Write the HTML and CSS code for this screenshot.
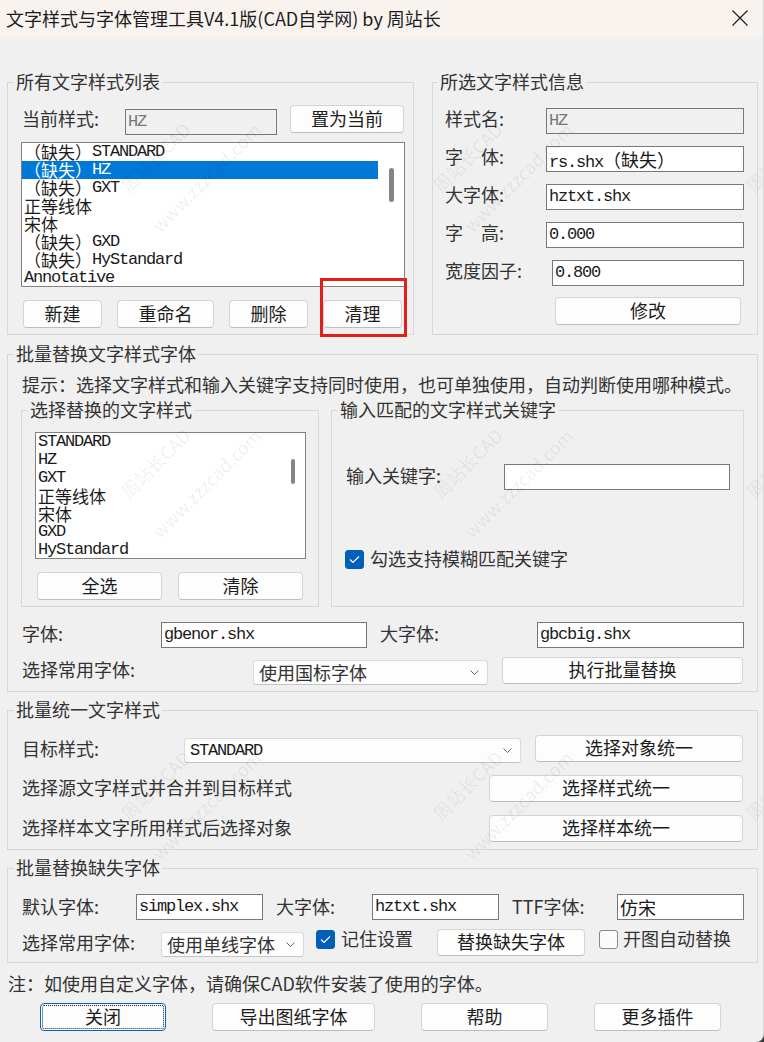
FILE: index.html
```html
<!DOCTYPE html>
<html lang="zh-CN">
<head>
  <meta charset="UTF-8">
  <title>文字样式与字体管理工具</title>
  <link rel="stylesheet" href="styles.css">
</head>
<body>
  <div class="window">
    <header class="titlebar">
      <span class="title">文字样式与字体管理工具V4.1版(CAD自学网) by 周站长</span>
      <svg class="close-x" width="16" height="16" viewBox="0 0 16 16"><path d="M0.5 0.5L15.5 15.5M15.5 0.5L0.5 15.5"/></svg>
    </header>

    <main class="dialog">
      <div class="top-row">
        <!-- style list -->
        <fieldset class="group style-list">
          <legend>所有文字样式列表</legend>
          <div class="gbody">
            <div class="row cur-row">
              <span class="lbl">当前样式:</span>
              <div class="edit disabled">HZ</div>
              <button class="btn">置为当前</button>
            </div>
            <div class="listbox styles-box">
              <div class="items">
                <div class="item"><span class="cj">（缺失）</span><span>STANDARD</span></div>
                <div class="item selected"><span class="cj">（缺失）</span><span>HZ</span></div>
                <div class="item"><span class="cj">（缺失）</span><span>GXT</span></div>
                <div class="item"><span class="cj">正等线体</span></div>
                <div class="item"><span class="cj">宋体</span></div>
                <div class="item"><span class="cj">（缺失）</span><span>GXD</span></div>
                <div class="item"><span class="cj">（缺失）</span><span>HyStandard</span></div>
                <div class="item"><span>Annotative</span></div>
              </div>
              <div class="vscroll"><div class="thumb"></div></div>
            </div>
            <div class="btn-row list-actions">
              <button class="btn b-new">新建</button>
              <button class="btn b-rename">重命名</button>
              <button class="btn b-del">删除</button>
              <span class="mark"><button class="btn b-purge">清理</button></span>
            </div>
          </div>
        </fieldset>

        <!-- selected style info -->
        <fieldset class="group style-info">
          <legend>所选文字样式信息</legend>
          <div class="gbody">
            <div class="field"><span class="lbl">样式名:</span><div class="edit disabled">HZ</div></div>
            <div class="field"><span class="lbl">字　体:</span><div class="edit">rs.shx<span class="cj">（缺失）</span></div></div>
            <div class="field"><span class="lbl">大字体:</span><div class="edit">hztxt.shx</div></div>
            <div class="field"><span class="lbl">字　高:</span><div class="edit">0.000</div></div>
            <div class="field wide-lbl"><span class="lbl">宽度因子:</span><div class="edit">0.800</div></div>
            <button class="btn b-modify">修改</button>
          </div>
        </fieldset>
      </div>

      <!-- batch replace -->
      <fieldset class="group batch">
        <legend>批量替换文字样式字体</legend>
        <div class="gbody">
          <p class="hint">提示：选择文字样式和输入关键字支持同时使用，也可单独使用，自动判断使用哪种模式。</p>
          <div class="sub-row">
            <fieldset class="group pick">
              <legend>选择替换的文字样式</legend>
              <div class="gbody">
                <div class="listbox pick-box">
                  <div class="items">
                    <div class="item"><span>STANDARD</span></div>
                    <div class="item"><span>HZ</span></div>
                    <div class="item"><span>GXT</span></div>
                    <div class="item"><span class="cj">正等线体</span></div>
                    <div class="item"><span class="cj">宋体</span></div>
                    <div class="item"><span>GXD</span></div>
                    <div class="item"><span>HyStandard</span></div>
                  </div>
                  <div class="vscroll"><div class="thumb"></div></div>
                </div>
                <div class="btn-row pick-actions">
                  <button class="btn">全选</button>
                  <button class="btn">清除</button>
                </div>
              </div>
            </fieldset>
            <fieldset class="group keyword">
              <legend>输入匹配的文字样式关键字</legend>
              <div class="gbody">
                <div class="row kw-row">
                  <span class="lbl">输入关键字:</span>
                  <div class="edit"></div>
                </div>
                <div class="opt fuzzy">
                  <span class="check on"><svg width="11" height="9" viewBox="0 0 11 9"><path d="M1 4.5L4 7.5L10 1.5"/></svg></span>
                  <span>勾选支持模糊匹配关键字</span>
                </div>
              </div>
            </fieldset>
          </div>
          <div class="row font-row">
            <span class="lbl l-font">字体:</span>
            <div class="edit e-font">gbenor.shx</div>
            <span class="lbl l-big">大字体:</span>
            <div class="edit e-big">gbcbig.shx</div>
          </div>
          <div class="row common-row">
            <span class="lbl l-common">选择常用字体:</span>
            <div class="combo c-common"><span>使用国标字体</span><svg class="chev" width="9" height="5" viewBox="0 0 9 5"><path d="M0.5 0.5L4.5 4.5L8.5 0.5"/></svg></div>
            <button class="btn b-run">执行批量替换</button>
          </div>
        </div>
      </fieldset>

      <!-- unify styles -->
      <fieldset class="group unify">
        <legend>批量统一文字样式</legend>
        <div class="gbody">
          <div class="row target-row">
            <span class="lbl l-target">目标样式:</span>
            <div class="combo c-target"><span class="mono">STANDARD</span><svg class="chev" width="9" height="5" viewBox="0 0 9 5"><path d="M0.5 0.5L4.5 4.5L8.5 0.5"/></svg></div>
            <button class="btn b-obj">选择对象统一</button>
          </div>
          <div class="row line-row">
            <span class="lbl">选择源文字样式并合并到目标样式</span>
            <button class="btn b-line">选择样式统一</button>
          </div>
          <div class="row line-row">
            <span class="lbl">选择样本文字所用样式后选择对象</span>
            <button class="btn b-line">选择样本统一</button>
          </div>
        </div>
      </fieldset>

      <!-- missing fonts -->
      <fieldset class="group missing">
        <legend>批量替换缺失字体</legend>
        <div class="gbody">
          <div class="row miss-row">
            <span class="lbl l-def">默认字体:</span>
            <div class="edit e-small">simplex.shx</div>
            <span class="lbl l-mid">大字体:</span>
            <div class="edit e-small">hztxt.shx</div>
            <span class="lbl l-ttf">TTF字体:</span>
            <div class="edit e-small"><span class="cj">仿宋</span></div>
          </div>
          <div class="row miss-opts">
            <span class="lbl l-common2">选择常用字体:</span>
            <div class="combo c-line"><span>使用单线字体</span><svg class="chev" width="9" height="5" viewBox="0 0 9 5"><path d="M0.5 0.5L4.5 4.5L8.5 0.5"/></svg></div>
            <div class="opt remember">
              <span class="check on"><svg width="11" height="9" viewBox="0 0 11 9"><path d="M1 4.5L4 7.5L10 1.5"/></svg></span>
              <span>记住设置</span>
            </div>
            <button class="btn b-miss">替换缺失字体</button>
            <div class="opt auto">
              <span class="check"></span>
              <span>开图自动替换</span>
            </div>
          </div>
        </div>
      </fieldset>

      <p class="note">注：如使用自定义字体，请确保CAD软件安装了使用的字体。</p>

      <div class="actions">
        <button class="btn act focus">关闭</button>
        <button class="btn act export">导出图纸字体</button>
        <button class="btn act">帮助</button>
        <button class="btn act">更多插件</button>
      </div>
    </main>

    <div class="watermarks">
      <div class="wm p1"><span class="brand">周站长CAD</span><span class="site">www.zzzcad.com</span></div>
      <div class="wm p2"><span class="brand">周站长CAD</span><span class="site">www.zzzcad.com</span></div>
      <div class="wm p3"><span class="brand">周站长CAD</span><span class="site">www.zzzcad.com</span></div>
      <div class="wm p4"><span class="brand">周站长CAD</span><span class="site">www.zzzcad.com</span></div>
      <div class="wm p5"><span class="brand">周站长CAD</span><span class="site">www.zzzcad.com</span></div>
      <div class="wm p6"><span class="brand">周站长CAD</span><span class="site">www.zzzcad.com</span></div>
      <div class="wm p7"><span class="brand">周站长CAD</span><span class="site">www.zzzcad.com</span></div>
      <div class="wm p8"><span class="brand">周站长CAD</span><span class="site">www.zzzcad.com</span></div>
      <div class="wm p9"><span class="brand">周站长CAD</span><span class="site">www.zzzcad.com</span></div>
    </div>
  </div>
</body>
</html>
```

FILE: styles.css
```css
* {
  box-sizing: border-box;
}

html {
  background: #3c3c3c;
}

body {
  margin: 0;
  width: 764px;
  height: 1042px;
  overflow: hidden;
  font-family: "Noto Sans CJK SC", sans-serif;
  font-size: 18px;
  color: #333;
}

.window {
  position: relative;
  width: 764px;
  height: 1042px;
  background: #f0f0f0;
  border-right: 1px solid #d6d6d6;
  border-bottom-right-radius: 8px;
  overflow: hidden;
}

/* title bar */
.titlebar {
  height: 37px;
  display: flex;
  align-items: center;
  justify-content: space-between;
  padding: 0 15px 2px 6px;
  background: #f8f3ef;
  color: #1c1c1c;
  line-height: 20px;
}

.close-x {
  fill: none;
  stroke: #1c1c1c;
  stroke-width: 1.2;
}

.dialog {
  padding: 0 5px 0 7px;
}

/* group boxes */
.group {
  margin: 0;
  padding: 0;
  min-width: 0;
  border: 1px solid #d8d8d8;
}

.group legend {
  margin-left: 6px;
  padding: 0 2px 3px;
  line-height: 18px;
  color: #333;
}

.row {
  display: flex;
  align-items: flex-start;
}

.lbl {
  flex: none;
  white-space: nowrap;
}

.btn {
  flex: none;
  height: 28px;
  padding: 0 0 2px;
  font-family: inherit;
  font-size: 18px;
  line-height: 24px;
  color: #1c1c1c;
  background: #fdfdfd;
  border: 1px solid #d4d4d4;
  border-bottom-color: #bdbdbd;
  border-radius: 4px;
}

.edit {
  flex: none;
  height: 26px;
  padding-left: 2px;
  background: #fff;
  border: 1px solid #787878;
  font: 17px/24px "Liberation Mono", "Noto Sans CJK SC", monospace;
  letter-spacing: -1.2px;
  color: #1a1a1a;
  white-space: nowrap;
  overflow: hidden;
}

.edit.disabled {
  background: #f0f0f0;
  color: #777;
}

.cj {
  font-family: "Noto Sans CJK SC", sans-serif;
  font-size: 18px;
  letter-spacing: 0;
}

.mono {
  font: 17px "Liberation Mono", monospace;
  letter-spacing: -1.2px;
  color: #1a1a1a;
}

.combo {
  flex: none;
  height: 25px;
  display: flex;
  align-items: center;
  justify-content: space-between;
  padding: 0 8px 1px 5px;
  background: #fdfdfd;
  border: 1px solid #dadada;
  border-bottom-color: #c4c4c4;
  border-radius: 3px;
  line-height: 22px;
}

.chev {
  fill: none;
  stroke: #666;
  stroke-width: 1;
}

.check {
  flex: none;
  width: 19px;
  height: 19px;
  margin-top: 1px;
  display: flex;
  align-items: center;
  justify-content: center;
  background: #fbfbfb;
  border: 1px solid #8a8a8a;
  border-radius: 3px;
}

.check.on {
  background: #005fb8;
  border-color: #005fb8;
}

.check svg {
  fill: none;
  stroke: #fff;
  stroke-width: 1.2;
}

.opt {
  display: flex;
  align-items: flex-start;
  gap: 6px;
  line-height: 19px;
  white-space: nowrap;
}

/* list boxes */
.listbox {
  display: flex;
  background: #fff;
  border: 1px solid #828282;
  overflow: hidden;
}

.items {
  flex: none;
  overflow: hidden;
}

.item {
  display: flex;
  align-items: center;
  height: 18px;
  padding-left: 2px;
  white-space: nowrap;
  font: 17px/16px "Liberation Mono", monospace;
  letter-spacing: -1.2px;
  color: #1a1a1a;
}

.item .cj {
  font-size: 17px;
  line-height: 16px;
}

.item.selected {
  background: #0078d7;
  color: #fff;
}

.vscroll {
  flex: 1;
}

.thumb {
  width: 5px;
  margin-left: 11px;
  border-radius: 3px;
  background: #858585;
}

.btn-row {
  display: flex;
}

/* top row */
.top-row {
  display: flex;
  gap: 18px;
  margin-top: 35px;
}

.style-list {
  width: 407px;
}

.style-list > .gbody {
  padding: 12px 7px 6px 13px;
}

.cur-row {
  height: 30px;
}

.cur-row .lbl {
  width: 104px;
  padding-left: 1px;
  line-height: 26px;
}

.cur-row .edit {
  width: 152px;
  margin-top: 4px;
}

.cur-row .btn {
  width: 114px;
  margin-left: 13px;
}

.styles-box {
  width: 384px;
  height: 145px;
  margin-top: 7px;
}

.styles-box .items {
  width: 356px;
}

.styles-box .thumb {
  height: 34px;
  margin-top: 25px;
}

.list-actions {
  gap: 15px;
  margin-top: 13px;
  padding-left: 2px;
}

.b-new,
.b-del,
.b-purge {
  width: 79px;
}

.b-rename {
  width: 97px;
}

.mark {
  position: relative;
  display: flex;
}

.mark::after {
  content: "";
  position: absolute;
  left: -3px;
  right: -5px;
  top: -22px;
  bottom: -9px;
  border: 3px solid #e0201b;
  pointer-events: none;
}

.style-info {
  width: 326px;
}

.style-info legend {
  margin-left: 5px;
}

.style-info > .gbody {
  padding: 15px 13px 9px 12px;
}

.field {
  display: flex;
  height: 26px;
}

.field + .field {
  margin-top: 12px;
}

.field .lbl {
  width: 101px;
  line-height: 21px;
}

.field .edit {
  flex: 1;
}

.field.wide-lbl .lbl {
  width: 107px;
}

.b-modify {
  display: block;
  width: 186px;
  margin: 11px 0 0 110px;
}

/* batch replace */
.batch {
  margin-top: 9px;
}

.batch > .gbody {
  padding: 0 13px 6px 13px;
}

.hint {
  margin: 9px 0 0;
  padding: 0 0 1px 1px;
  line-height: 20px;
  white-space: nowrap;
}

.sub-row {
  display: flex;
  gap: 12px;
  margin-top: 5px;
}

.pick {
  width: 298px;
}

.pick > .gbody {
  padding: 11px 0 6px 13px;
}

.pick-box {
  width: 271px;
  height: 127px;
}

.pick-box .items {
  width: 244px;
}

.pick-box .thumb {
  width: 4px;
  height: 25px;
  margin-top: 26px;
}

.pick-actions {
  gap: 16px;
  margin-top: 13px;
  padding-left: 2px;
}

.pick-actions .btn {
  width: 125px;
}

.keyword {
  flex: 1;
}

.keyword > .gbody {
  padding: 43px 13px 0 13px;
}

.kw-row .lbl {
  width: 159px;
  padding-left: 1px;
  line-height: 22px;
}

.kw-row .edit {
  width: 226px;
}

.fuzzy {
  margin-top: 59px;
}

.font-row {
  margin-top: 15px;
}

.font-row .lbl {
  line-height: 22px;
}

.l-font {
  width: 140px;
  padding-left: 1px;
}

.e-font {
  width: 206px;
}

.l-big {
  width: 170px;
  padding-left: 13px;
}

.e-big {
  flex: 1;
}

.common-row {
  margin-top: 9px;
}

.l-common {
  width: 232px;
  padding-left: 1px;
  line-height: 25px;
}

.c-common {
  width: 235px;
  margin-top: 3px;
}

.b-run {
  width: 241px;
  height: 27px;
  margin-left: 14px;
  line-height: 23px;
}

/* unify styles */
.unify {
  margin-top: 8px;
}

.unify > .gbody {
  padding: 14px 14px 7px 13px;
}

.l-target {
  width: 163px;
  padding-left: 1px;
  line-height: 26px;
}

.c-target {
  width: 337px;
  margin-top: 3px;
}

.b-obj {
  width: 208px;
  height: 27px;
  margin-left: 14px;
  line-height: 23px;
}

.line-row {
  justify-content: space-between;
  margin-top: 12px;
}

.line-row + .line-row {
  margin-top: 13px;
}

.line-row .lbl {
  padding-left: 1px;
  line-height: 24px;
}

.b-line {
  width: 254px;
  height: 27px;
  line-height: 23px;
}

/* missing fonts */
.missing {
  margin-top: 8px;
}

.missing > .gbody {
  padding: 15px 13px 5px 13px;
}

.miss-row .lbl {
  line-height: 24px;
}

.l-def {
  width: 115px;
  padding-left: 1px;
}

.e-small {
  width: 127px;
}

.l-mid {
  width: 109px;
  padding-left: 13px;
}

.l-ttf {
  width: 118px;
  padding-left: 13px;
}

.miss-opts {
  margin-top: 9px;
}

.l-common2 {
  width: 140px;
  padding-left: 1px;
  line-height: 26px;
}

.c-line {
  width: 143px;
  margin-top: 3px;
}

.remember {
  width: 121px;
  margin-left: 12px;
}

.b-miss {
  width: 148px;
  height: 27px;
  line-height: 23px;
}

.auto {
  gap: 5px;
  margin-left: 14px;
}

/* footer */
.note {
  margin: 11px 0 0 1px;
  padding-bottom: 2px;
  line-height: 18px;
  white-space: nowrap;
}

.actions {
  display: flex;
  gap: 46px;
  margin-top: 9px;
  padding-left: 33px;
}

.act {
  width: 127px;
}

.act.focus {
  width: 126px;
  border-color: #0067c0;
  outline: 1px dotted #222;
  outline-offset: -3px;
}

.act.export {
  width: 163px;
}

/* watermark */
.watermarks {
  position: absolute;
  inset: 0;
  pointer-events: none;
}

.wm {
  position: absolute;
  width: 0;
  height: 0;
  transform: rotate(-45deg);
  transform-origin: 0 0;
  color: rgba(0, 0, 0, 0.07);
  font-size: 18px;
  line-height: 20px;
  white-space: nowrap;
}

.wm span {
  position: absolute;
  text-align: center;
}

.wm .brand {
  left: -70px;
  top: -10px;
  width: 140px;
}

.wm .site {
  left: -58px;
  top: 40px;
  width: 160px;
}

.p1 { left: 155px; top: 157px; }
.p2 { left: 467px; top: 157px; }
.p3 { left: 780px; top: 157px; }
.p4 { left: 155px; top: 463px; }
.p5 { left: 467px; top: 463px; }
.p6 { left: 780px; top: 463px; }
.p7 { left: 155px; top: 785px; }
.p8 { left: 467px; top: 785px; }
.p9 { left: 780px; top: 785px; }
```
